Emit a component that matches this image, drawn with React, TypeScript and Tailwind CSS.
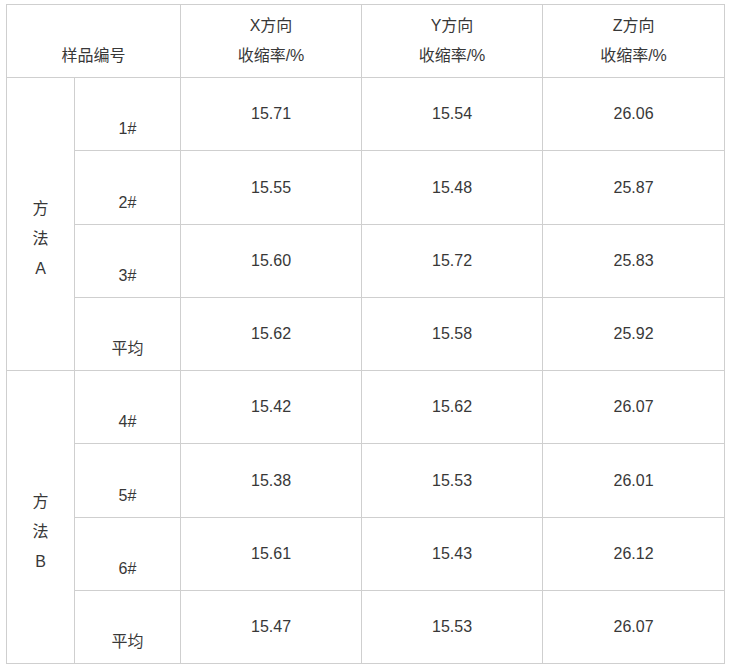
import React from "react";

const rowsA = [
  ["1#", "15.71", "15.54", "26.06"],
  ["2#", "15.55", "15.48", "25.87"],
  ["3#", "15.60", "15.72", "25.83"],
  ["平均", "15.62", "15.58", "25.92"],
];
const rowsB = [
  ["4#", "15.42", "15.62", "26.07"],
  ["5#", "15.38", "15.53", "26.01"],
  ["6#", "15.61", "15.43", "26.12"],
  ["平均", "15.47", "15.53", "26.07"],
];
const heightsA = ["h-[73px]", "h-[74px]", "h-[73px]", "h-[73px]"];
const heightsB = ["h-[73px]", "h-[74px]", "h-[73px]", "h-[73px]"];

const cell = "border border-[#cfcfcf] text-center align-middle p-0";

function Group({ label, rows, heights }: { label: string; rows: string[][]; heights: string[] }) {
  return (
    <>
      {rows.map((r, i) => (
        <tr key={i} className={heights[i]}>
          {i === 0 && (
            <td rowSpan={4} className={cell}>
              <br />方<br />法<br />{label}
            </td>
          )}
          <td className={cell}>
            <br />
            {r[0]}
          </td>
          <td className={cell}>{r[1]}</td>
          <td className={cell}>{r[2]}</td>
          <td className={cell}>{r[3]}</td>
        </tr>
      ))}
    </>
  );
}

export default function App() {
  return (
    <div
      className="bg-white w-[732px] h-[670px] pt-[4px] pl-[6px] text-[16px] leading-[30px] text-[#383838]"
      style={{ fontFamily: '"Liberation Sans", Arial, "Noto Sans CJK SC", sans-serif' }}
    >
      <table className="border-collapse table-fixed w-[718px]">
        <colgroup>
          <col className="w-[68px]" />
          <col className="w-[106px]" />
          <col className="w-[181px]" />
          <col className="w-[181px]" />
          <col className="w-[182px]" />
        </colgroup>
        <tbody>
          <tr className="h-[73px]">
            <td colSpan={2} className={cell}>
              <br />样品编号
            </td>
            <td className={cell}>
              X方向
              <br />收缩率/%
            </td>
            <td className={cell}>
              Y方向
              <br />收缩率/%
            </td>
            <td className={cell}>
              Z方向
              <br />收缩率/%
            </td>
          </tr>
          <Group label="A" rows={rowsA} heights={heightsA} />
          <Group label="B" rows={rowsB} heights={heightsB} />
        </tbody>
      </table>
    </div>
  );
}
